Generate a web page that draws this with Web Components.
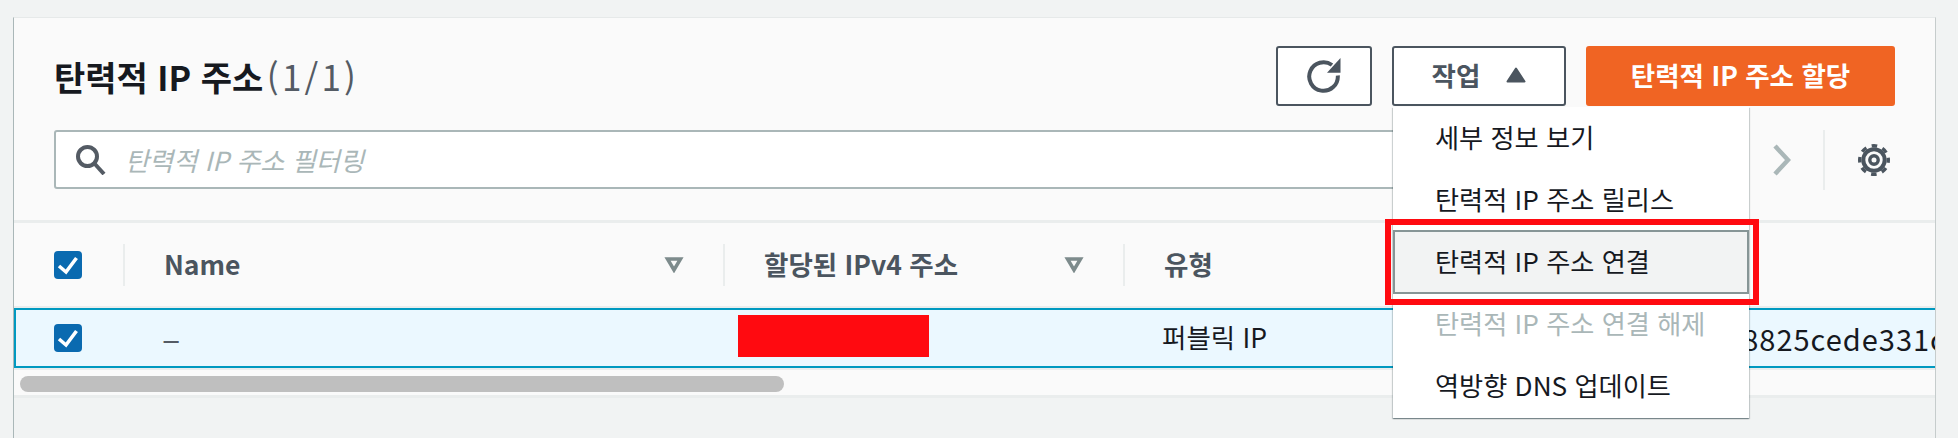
<!DOCTYPE html>
<html lang="ko">
<head>
<meta charset="utf-8">
<style>
    html, body { margin: 0; height: 100%; overflow: hidden; background: #f1f3f3; }
    body {
        font-family: "Noto Sans CJK KR", "Noto Sans", sans-serif;
        color: #16191f;
    }
</style>
</head>
<body>

<template id="eip-panel-template">
    <style>
        :host {
            display: block;
            position: relative;
            box-sizing: border-box;
            width: 1923px;
            height: 421px;
            margin: 17px 0 0 13px;
            border-left: 1px solid #aab7b8;
            border-right: 1px solid #c6cccc;
            border-top: 1px solid #e6e9e9;
        }
        .body { background: #fafafa; height: 380px; border-bottom: 3px solid #eaeded; box-sizing: border-box; }
        .top { display: flex; align-items: center; height: 87px; padding: 28px 40px 0 40px; box-sizing: border-box; }
        .title { flex: 1; font-size: 34px; font-weight: 700; }
        .title span { font-weight: 400; font-size: 35px; color: #545b64; letter-spacing: 3.200px; margin-left: -6px; }
        .actions { display: flex; gap: 20px; }
        .filter { display: flex; align-items: center; height: 59px; margin-top: 25px; padding: 0 0 0 40px; }
        .pager { display: flex; align-items: center; height: 60px; margin-left: 49px; }
        .sep { width: 2px; height: 60px; background: #eaeded; margin: 0 33px 0 32px; }
        ::slotted(eip-menu) { position: absolute; left: 1379px; top: 89px; z-index: 2; }
    </style>
    <div class="body">
        <div class="top">
            <div class="title">탄력적 IP 주소 <span>(1/1)</span></div>
            <div class="actions"><slot name="actions"></slot></div>
        </div>
        <div class="filter">
            <slot name="search"></slot>
            <div class="pager">
                <svg width="20" height="32" viewBox="0 0 20 32"><path d="M4 2l13 14L4 30" fill="none" stroke="#aab7b8" stroke-width="4.500"/></svg>
                <div class="sep"></div>
                <svg width="32" height="32" viewBox="0 0 32 32" fill="none" stroke="#4b555f"><circle cx="16" cy="16" r="10.700" stroke-width="4"/><circle cx="16" cy="16" r="14.300" stroke-width="3.400" stroke-dasharray="5.620 5.610" stroke-dashoffset="2.810"/><circle cx="16" cy="16" r="4.200" stroke-width="3.400"/></svg>
            </div>
        </div>
        <slot name="table"></slot>
    </div>
    <slot name="menu"></slot>
</template>

<template id="eip-button-template">
    <style>
        :host {
            display: inline-flex;
            align-items: center;
            justify-content: center;
            box-sizing: border-box;
            height: 60px;
            padding-bottom: 2px;
            border: 2px solid #4b555f;
            border-radius: 3px;
            background: #fff;
            color: #4b555f;
            font-size: 26.5px;
            font-weight: 700;
            gap: 26px;
        }
        :host([primary]) { background: #f06423; border-color: #f06423; color: #fff; }
    </style>
    <slot></slot>
</template>

<template id="eip-search-template">
    <style>
        :host {
            display: flex;
            align-items: center;
            box-sizing: border-box;
            width: 1668px;
            height: 59px;
            border: 2px solid #aab7b8;
            border-radius: 3px;
            background: #fff;
            padding-left: 20px;
            gap: 19px;
            color: #aab7b8;
            font-size: 26.2px;
            font-style: italic;
        }
    </style>
    <svg width="30" height="30" viewBox="0 0 30 30" fill="none" stroke="#545b64" stroke-width="4"><circle cx="11.500" cy="11.500" r="9.500"/><path d="M18 18l10 11"/></svg>
    <slot></slot>
</template>

<template id="eip-table-template">
    <style>
        :host { display: block; margin-top: 31px; border-top: 3px solid #eaeded; }
        .head, .row { display: grid; align-items: center; }
        .head { grid-template-columns: 109px 600px 400px 1fr; height: 85px; box-sizing: border-box; border-bottom: 2px solid #eaeded; color: #4b555f; font-size: 26.5px; font-weight: 700; }
        .row {
            grid-template-columns: 107px 600px 400px 1fr;
            height: 60px;
            box-sizing: border-box;
            border-top: 2px solid #0099c0;
            border-bottom: 2px solid #0099c0;
            border-left: 2px solid #0099c0;
            background: #ebf8ff;
            font-size: 26.5px;
            overflow: hidden;
            white-space: nowrap;
        }
        .th { display: flex; align-items: center; height: 42px; box-sizing: border-box; border-left: 2px solid #eaeded; padding: 0 39px 0 39px; justify-content: space-between; }
        .th span { padding-bottom: 3px; }
        .cb { padding-left: 40px; }
        .row .cb { padding-left: 38px; }
        .dash { padding-left: 39px; color: #545b64; font-size: 34px; line-height: 1; }
        .red { width: 191px; height: 42px; margin: 0 0 5px 15px; background: #ff0a10; }
        .scroll { height: 28px; box-sizing: border-box; border-top: 2px solid #eaeded; padding: 6px 0 0 6px; }
        .thumb { width: 764px; height: 16px; border-radius: 8px; background: #bfbfbf; }
        .last { display: flex; padding: 0 0 0 39px; }
        .arn { margin-left: 458px; font-size: 29px; letter-spacing: 1px; }
    </style>
    <div class="head">
        <div class="cb"><eip-check></eip-check></div>
        <div class="th"><span>Name</span><eip-filter></eip-filter></div>
        <div class="th"><span>할당된 IPv4 주소</span><eip-filter></eip-filter></div>
        <div class="th"><span>유형</span></div>
    </div>
    <div class="row">
        <div class="cb"><eip-check></eip-check></div>
        <div class="dash">–</div>
        <div><div class="red"></div></div>
        <div class="last"><span>퍼블릭 IP</span><span class="arn">78825cede331c</span></div>
    </div>
    <div class="scroll"><div class="thumb"></div></div>
</template>

<template id="eip-menu-template">
    <style>
        :host {
            display: block;
            width: 356px;
            box-sizing: border-box;
            background: #fff;
            padding: 0 0 1px;
            box-shadow: 0 1px 1px 0 rgba(0,28,36,.3), 1px 1px 1px 0 rgba(0,28,36,.15), -1px 1px 1px 0 rgba(0,28,36,.15);
        }
    </style>
    <slot></slot>
</template>

<template id="eip-menu-item-template">
    <style>
        :host {
            display: flex;
            align-items: center;
            box-sizing: border-box;
            position: relative;
            height: 62px;
            padding: 0 0 3px 42px;
            font-size: 26.2px;
            color: #16191f;
        }
        :host([disabled]) { color: #aab7b8; }
        :host([active]) { height: 64px; margin: -1px 0; background: #f2f3f3; outline: 2px solid #879596; outline-offset: -2px; }
        .mark { display: none; position: absolute; left: -8px; top: -11px; width: 374px; height: 86px; box-sizing: border-box; border: 6px solid #ff0a10; pointer-events: none; }
        :host([active]) .mark { display: block; }
    </style>
    <slot></slot>
    <div class="mark"></div>
</template>

<script>
    // plain shadow element built from a template of the same id
    function define(name, markup) {
        customElements.define(name, class extends HTMLElement {
            constructor() {
                super();
                this.attachShadow({mode: 'open'});
                if (markup) {
                    this.shadowRoot.innerHTML = markup;
                } else {
                    this.shadowRoot.appendChild(document.importNode(document.getElementById(name + '-template').content, true));
                }
            }
        });
    }
    define('eip-check', '<style>:host{display:block;width:28px;height:28px}svg{display:block}</style><svg width="28" height="28" viewBox="0 0 28 28"><rect width="28" height="28" rx="4" fill="#0a6ab0"/><path d="M5 15l7 6L22.500 7" fill="none" stroke="#fff" stroke-width="3.600"/></svg>');
    define('eip-filter', '<style>:host{display:block;width:20px;height:16px}svg{display:block}</style><svg width="20" height="16" viewBox="0 0 20 16"><path d="M3.500 2h13L10 13z" fill="none" stroke="#7d8b8c" stroke-width="3.500"/></svg>');
    define('eip-panel');
    define('eip-button');
    define('eip-search');
    define('eip-table');
    define('eip-menu');
    define('eip-menu-item');
</script>

<eip-panel>
    <eip-button slot="actions" style="width:96px"><svg style="margin-top:2px" width="34" height="36" viewBox="0 0 34 36"><path d="M25 7A14.300 14.300 0 1 0 30.800 17.500" fill="none" stroke="#4b555f" stroke-width="4"/><path d="M33.500 0V14.700H20z" fill="#4b555f"/></svg></eip-button>
    <eip-button slot="actions" style="width:174px">작업<svg width="20" height="16" viewBox="0 0 20 16"><path d="M10 1.500L18.500 14.500H1.500z" fill="#4b555f" stroke="#4b555f" stroke-width="2" stroke-linejoin="round"/></svg></eip-button>
    <eip-button slot="actions" primary style="width:309px">탄력적 IP 주소 할당</eip-button>
    <eip-search slot="search">탄력적 IP 주소 필터링</eip-search>
    <eip-table slot="table"></eip-table>
    <eip-menu slot="menu">
        <eip-menu-item>세부 정보 보기</eip-menu-item>
        <eip-menu-item>탄력적 IP 주소 릴리스</eip-menu-item>
        <eip-menu-item active>탄력적 IP 주소 연결</eip-menu-item>
        <eip-menu-item disabled>탄력적 IP 주소 연결 해제</eip-menu-item>
        <eip-menu-item>역방향 DNS 업데이트</eip-menu-item>
    </eip-menu>
</eip-panel>

</body>
</html>
